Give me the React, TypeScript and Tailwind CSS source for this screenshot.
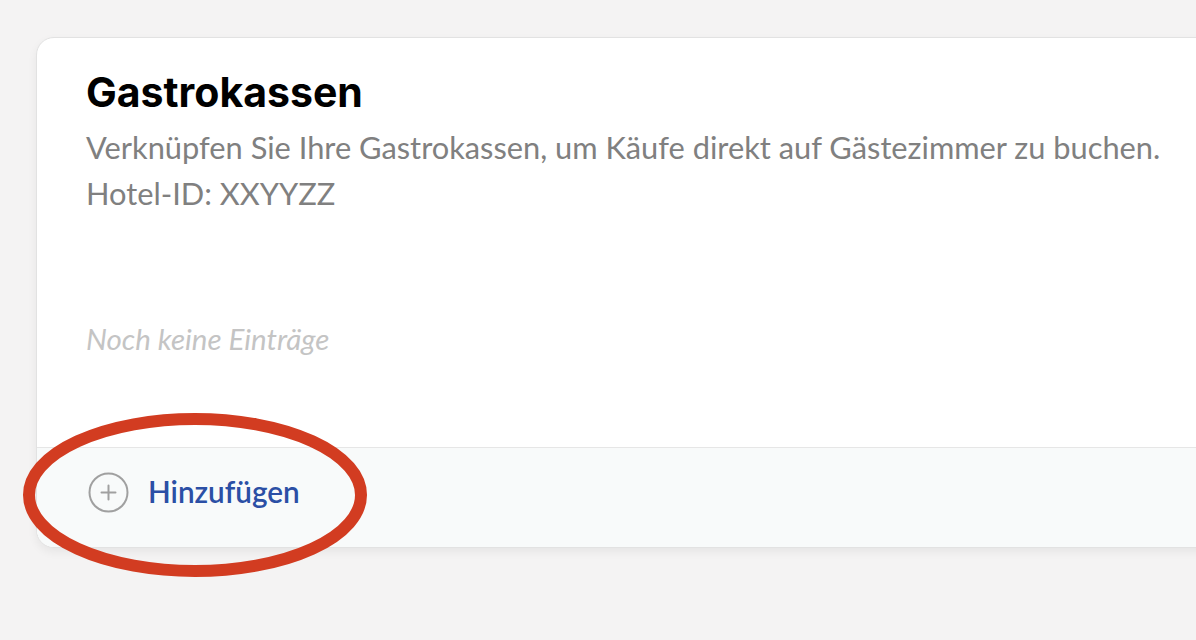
import React from "react";

export default function App() {
  return (
    <div className="relative w-[1196px] h-[640px] overflow-hidden bg-[#f4f3f3]" style={{ fontFamily: "Lato, 'Noto Sans', sans-serif" }}>
      <div className="absolute left-[36px] top-[37px] w-[1220px] rounded-[18px] border border-[#e2e2e2] bg-white shadow-[0_4px_10px_rgba(0,0,0,0.06)] overflow-hidden">
        <div className="pl-[49px] pt-[30px] h-[409px]">
          <h1 className="text-[41px] leading-[48px] font-bold text-black" style={{ fontFamily: "Inter, 'Liberation Sans', sans-serif" }}>
            Gastrokassen
          </h1>
          <p className="mt-[9px] text-[30.8px] leading-[46px] text-[#808080] whitespace-nowrap">
            Verknüpfen Sie Ihre Gastrokassen, um Käufe direkt auf Gästezimmer zu buchen.
          </p>
          <p className="text-[30.8px] leading-[46px] text-[#808080]">Hotel-ID: XXYYZZ</p>
          <p className="mt-[102px] text-[29.5px] leading-[40px] italic text-[#c4c4c4]">Noch keine Einträge</p>
        </div>
        <div className="h-[100px] border-t border-[#e6e6e6] bg-[#f8fafa] flex items-center pb-[10px] pl-[51px] gap-[19px]">
          <svg width="41" height="41" viewBox="0 0 41 41" className="shrink-0">
            <circle cx="20.5" cy="20.5" r="19" fill="none" stroke="#a0a0a0" strokeWidth="2" />
            <path d="M20.5 13.5v14M13.5 20.5h14" stroke="#a0a0a0" strokeWidth="2" strokeLinecap="round" />
          </svg>
          <span className="text-[29.7px] font-semibold text-[#2b4fa5]">Hinzufügen</span>
        </div>
      </div>
      <svg className="absolute left-0 top-0 pointer-events-none" width="1196" height="640">
        <ellipse cx="195" cy="495" rx="166" ry="76" fill="none" stroke="#d23c21" strokeWidth="12" />
      </svg>
    </div>
  );
}
